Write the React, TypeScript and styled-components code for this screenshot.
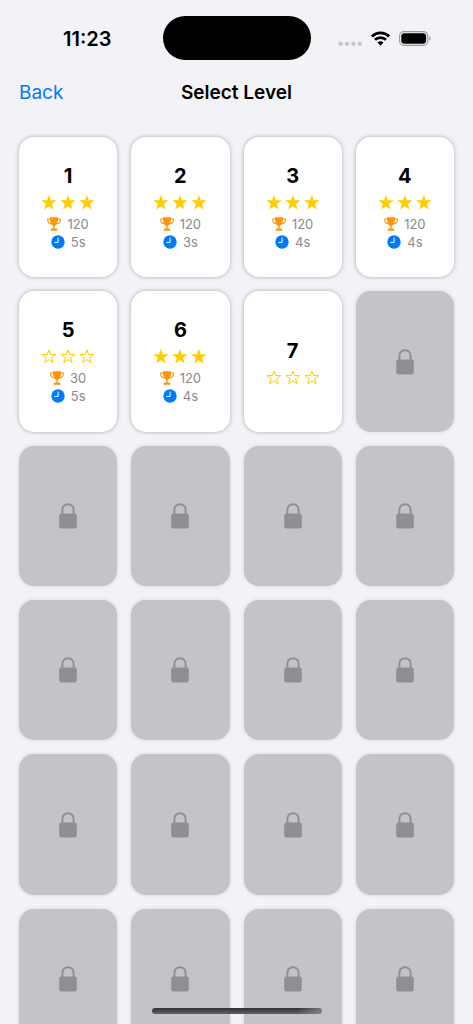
import React from "react";
import styled, { createGlobalStyle } from "styled-components";

const GlobalStyle = createGlobalStyle`
  * { box-sizing: border-box; }
  body {
    margin: 0;
    background: #f2f2f7;
    color: #000;
    font-family: Inter, "Liberation Sans", sans-serif;
  }
`;

const Screen = styled.div`
  height: 100vh;
  display: flex;
  flex-direction: column;
  overflow: hidden;
`;

const StatusBar = styled.header`
  display: grid;
  grid-template-columns: 1fr auto 1fr;
  align-items: center;
  padding-top: 16px;
  flex: none;
`;

const Time = styled.time`
  padding: 2px 0 0 63px;
  font-size: 20px;
  font-weight: 600;
  line-height: 24px;
`;

const Island = styled.div`
  width: 148px;
  height: 44px;
  border-radius: 22px;
  background: #000;
`;

const StatusIcons = styled.div`
  display: flex;
  justify-content: flex-end;
  gap: 9px;
  padding-right: 42px;
`;

const NavBar = styled.nav`
  display: grid;
  grid-template-columns: 1fr auto 1fr;
  align-items: center;
  height: 64px;
  padding: 2px 19px 0;
  flex: none;
`;

const BackButton = styled.button`
  justify-self: start;
  border: 0;
  padding: 0;
  background: none;
  color: #007aff;
  font: inherit;
  font-size: 19px;
  line-height: 26px;
  cursor: pointer;
`;

const Title = styled.h1`
  margin: 0;
  font-size: 19px;
  font-weight: 600;
  line-height: 26px;
`;

const LevelGrid = styled.main`
  flex: 1;
  min-height: 0;
  overflow-y: auto;
  scrollbar-width: none;
  display: grid;
  grid-template-columns: repeat(4, 1fr);
  grid-auto-rows: max-content;
  gap: 14px;
  padding: 13px 19px 14px;
`;

const Card = styled.button<{ $locked?: boolean }>`
  display: flex;
  flex-direction: column;
  align-items: center;
  justify-content: center;
  width: 100%;
  aspect-ratio: 7 / 10;
  padding: 0;
  border: 0;
  border-radius: 15px;
  font: inherit;
  color: #000;
  background: ${(p) => (p.$locked ? "#c4c3c8" : "#fff")};
  box-shadow: 0 0 4px ${(p) => (p.$locked ? "rgba(0, 0, 0, 0.12)" : "rgba(0, 0, 0, 0.3)")};
`;

const LevelNumber = styled.span`
  font-size: 20px;
  font-weight: 700;
  line-height: 25px;
`;

const Stars = styled.span`
  display: flex;
  gap: 3px;
  margin-top: 6px;
`;

const Stats = styled.span`
  display: flex;
  flex-direction: column;
  align-items: center;
  margin-top: 5px;
`;

const Stat = styled.span`
  display: flex;
  align-items: center;
  gap: 6px;
  font-size: 13px;
  line-height: 18px;
  color: #8a8a8e;
`;

const HomeIndicator = styled.div`
  position: fixed;
  left: 50%;
  bottom: 10px;
  width: 170px;
  height: 6px;
  margin-left: -85px;
  border-radius: 3px;
  background:
    linear-gradient(to right, transparent 85%, rgba(150, 150, 150, 0.7)),
    linear-gradient(#303030, #626262);
`;

const Signal = () => (
  <svg width="24" height="15" viewBox="0 0 24 15" fill="#c5c5ca" aria-hidden="true">
    {[0, 6.4, 12.8, 19.2].map((x) => (
      <rect key={x} x={x + 0.6} y="10.7" width="4" height="4" rx="1.4" />
    ))}
  </svg>
);

const Wifi = () => (
  <svg width="19" height="15" viewBox="0 0 19 15" aria-hidden="true">
    <g fill="none" stroke="#000" strokeWidth="2.8">
      <path d="M0.9 5.4A12.3 12.3 0 0 1 18.1 5.4" />
      <path d="M4 8.8A7.9 7.9 0 0 1 15 8.8" />
    </g>
    <path d="M6.5 11.6A4.4 4.4 0 0 1 12.5 11.6L9.5 14.7Z" />
  </svg>
);

const Battery = () => (
  <svg width="32" height="15" viewBox="0 0 32 15" aria-hidden="true">
    <rect x="0.6" y="0.6" width="28.2" height="13.8" rx="4.4" fill="none" stroke="#98989c" strokeWidth="1.1" />
    <rect x="2.3" y="2.3" width="24.8" height="10.4" rx="3" />
    <path d="M30.2 5.2Q31.7 5.8 31.7 7.5T30.2 9.8Z" fill="#98989c" />
  </svg>
);

const Star = ({ filled }: { filled: boolean }) => (
  <svg width="16" height="15" viewBox="0 0 16 15" aria-hidden="true">
    <path
      d={
        filled
          ? "M7.9 .5 9.6 5.5 14.9 5.6 10.7 8.8 12.2 13.9 7.9 10.9 3.6 13.9 5.1 8.8.9 5.6 6.2 5.5Z"
          : "M7.9 .9 9.5 5.5 14.7 5.6 10.6 8.7 12.1 13.6 7.9 10.7 3.7 13.6 5.2 8.7 1.1 5.6 6.3 5.5Z"
      }
      fill={filled ? "#fc0" : "none"}
      stroke="#fc0"
      strokeWidth={filled ? 0.5 : 1}
      strokeLinejoin={filled ? "round" : "miter"}
    />
  </svg>
);

const Trophy = () => (
  <svg width="14" height="14" viewBox="0 0 14 14" aria-hidden="true">
    <path
      d="M3.4 2H.8V3.2C.8 5.3 2.2 6.6 4.5 6.9M10.6 2h2.6V3.2c0 2.1-1.4 3.4-3.7 3.7"
      fill="none"
      stroke="#ff9500"
      strokeWidth="1.1"
    />
    <path
      d="M3.7.3H10.3Q11.1.3 11.1 1.1C11.1 4.9 10 7.9 7.7 8.9V11.4H9.2Q10.3 11.4 10.3 12.4V13.7H3.7V12.4Q3.7 11.4 4.8 11.4H6.3V8.9C4 7.9 2.9 4.9 2.9 1.1Q2.9.3 3.7.3Z"
      fill="#ff9500"
    />
  </svg>
);

const Clock = () => (
  <svg width="14" height="14" viewBox="0 0 14 14" aria-hidden="true">
    <circle cx="7" cy="7" r="6.7" fill="#007aff" />
    <path d="M7.1 3V7.4H3.7" fill="none" stroke="#fff" strokeWidth="1" strokeLinecap="round" strokeLinejoin="round" />
  </svg>
);

const Lock = () => (
  <svg width="18" height="26" viewBox="0 0 18 26" aria-hidden="true">
    <path
      d="M3.4 12V6.8C3.4 3.4 5.8 1.3 9 1.3S14.6 3.4 14.6 6.8V12"
      fill="none"
      stroke="#8e8e93"
      strokeWidth="1.9"
    />
    <rect x="0.2" y="10.5" width="17.6" height="15" rx="2.2" fill="#8e8e93" />
  </svg>
);

type Level = { id: number; stars?: number; score?: number; seconds?: number };

const levels: Level[] = [
  { id: 1, stars: 3, score: 120, seconds: 5 },
  { id: 2, stars: 3, score: 120, seconds: 3 },
  { id: 3, stars: 3, score: 120, seconds: 4 },
  { id: 4, stars: 3, score: 120, seconds: 4 },
  { id: 5, stars: 0, score: 30, seconds: 5 },
  { id: 6, stars: 3, score: 120, seconds: 4 },
  { id: 7, stars: 0 },
  ...Array.from({ length: 17 }, (_, i) => ({ id: i + 8 })),
];

const LevelCard = ({ level }: { level: Level }) => {
  const { id, stars, score, seconds } = level;
  if (stars === undefined) {
    return (
      <Card $locked disabled aria-label={`Level ${id}, locked`}>
        <Lock />
      </Card>
    );
  }
  return (
    <Card>
      <LevelNumber>{id}</LevelNumber>
      <Stars>
        {[0, 1, 2].map((i) => (
          <Star key={i} filled={i < stars} />
        ))}
      </Stars>
      {score !== undefined && (
        <Stats>
          <Stat>
            <Trophy />
            {score}
          </Stat>
          <Stat>
            <Clock />
            {`${seconds}s`}
          </Stat>
        </Stats>
      )}
    </Card>
  );
};

export default function App() {
  return (
    <>
      <GlobalStyle />
      <Screen>
        <StatusBar>
          <Time>11:23</Time>
          <Island />
          <StatusIcons>
            <Signal />
            <Wifi />
            <Battery />
          </StatusIcons>
        </StatusBar>
        <NavBar>
          <BackButton>Back</BackButton>
          <Title>Select Level</Title>
        </NavBar>
        <LevelGrid>
          {levels.map((level) => (
            <LevelCard key={level.id} level={level} />
          ))}
        </LevelGrid>
        <HomeIndicator />
      </Screen>
    </>
  );
}
